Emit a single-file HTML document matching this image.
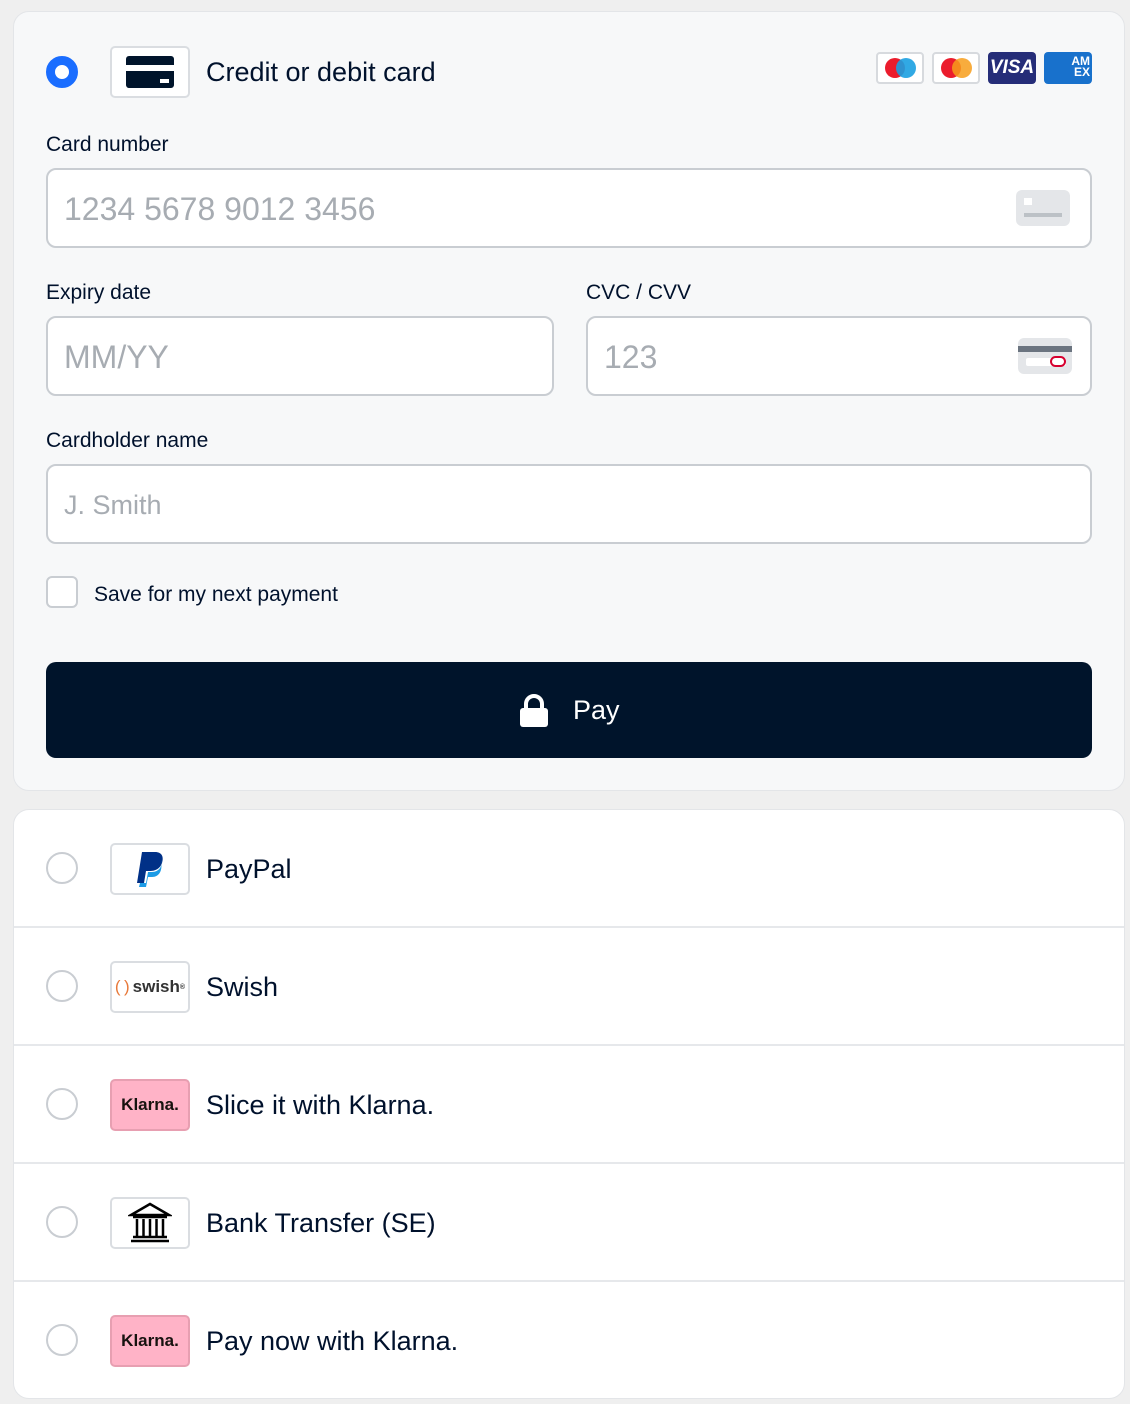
<!DOCTYPE html>
<html><head><meta charset="utf-8"><style>
*{box-sizing:border-box;margin:0;padding:0}
body{width:1130px;height:1404px;background:#efefef;font-family:"Liberation Sans",Arial,sans-serif;color:#00112c;position:relative;overflow:hidden}
.a{position:absolute}
.card1{left:13px;top:11px;width:1112px;height:780px;background:#f7f8f9;border:1px solid #e3e5e8;border-radius:16px}
.card2{left:13px;top:809px;width:1112px;height:590px;background:#fff;border:1px solid #e3e5e8;border-radius:16px;overflow:hidden}
.logo{width:80px;height:52px;border:2px solid #dadde1;border-radius:5px;background:#fff;display:flex;align-items:center;justify-content:center}
.lbl{font-size:21px}
.inp{border:2px solid #c9cdd2;border-radius:10px;background:#fff;height:80px;font-size:32px;color:#a7acb2;padding-left:16px;line-height:78px}
.radio{width:32px;height:32px;border-radius:50%;border:2px solid #c9cdd2;background:#fff}
.row{position:absolute;left:0;width:1112px;height:118px;border-bottom:2px solid #e6e8eb}
.row .radio{position:absolute;left:32px;top:42px}
.row .logo{position:absolute;left:96px;top:33px}
.row .t{position:absolute;left:192px;top:44px;font-size:27px}
.kl{background:#ffb3c7;border-color:#e79fb1;font-weight:bold;font-size:17px;color:#17120f}
.cb{width:76px;height:24px;border:2px solid #d7dade;border-radius:4px;background:#fff}
</style></head><body>
<div class="a card1"></div>
<div class="a radio" style="left:46px;top:56px;border:9px solid #1a6dff;background:#fff"></div>
<div class="a logo" style="left:110px;top:46px"><svg width="50" height="36"><rect x="1" y="2" width="48" height="32" rx="3" fill="#00142b"/><rect x="1" y="11" width="48" height="6" fill="#fff"/><rect x="35" y="25" width="9" height="4" fill="#fff"/></svg></div>
<div class="a" style="left:206px;top:57px;font-size:27px">Credit or debit card</div>
<div class="a cb" style="left:876px;top:52px;width:48px;height:32px"><svg width="44" height="28"><circle cx="17" cy="14" r="10" fill="#eb1c2d"/><circle cx="28" cy="14" r="10" fill="#1ba0e1" opacity=".9"/></svg></div>
<div class="a cb" style="left:932px;top:52px;width:48px;height:32px"><svg width="44" height="28"><circle cx="17" cy="14" r="10" fill="#eb1c2d"/><circle cx="28" cy="14" r="10" fill="#f79e1b" opacity=".85"/></svg></div>
<div class="a" style="left:988px;top:52px;width:48px;height:32px;background:#252d78;border-radius:4px;color:#fff;font-weight:bold;font-style:italic;font-size:19px;text-align:center;line-height:32px">VISA</div>
<div class="a" style="left:1044px;top:52px;width:48px;height:32px;background:#1871cc;border-radius:4px;color:#fff;font-weight:bold;font-size:12px;line-height:11px;text-align:right;padding:4px 2px 0 0">AM<br>EX</div>
<div class="a lbl" style="left:46px;top:133px">Card number</div>
<div class="a inp" style="left:46px;top:168px;width:1046px">1234 5678 9012 3456</div>
<div class="a" style="left:1016px;top:190px;width:54px;height:36px;background:#e4e6e9;border-radius:6px"><div class="a" style="left:8px;top:8px;width:8px;height:7px;background:#fff"></div><div class="a" style="left:8px;top:23px;width:38px;height:4px;background:#bcc1c6"></div></div>
<div class="a lbl" style="left:46px;top:281px">Expiry date</div>
<div class="a lbl" style="left:586px;top:281px">CVC / CVV</div>
<div class="a inp" style="left:46px;top:316px;width:508px">MM/YY</div>
<div class="a inp" style="left:586px;top:316px;width:506px">123</div>
<div class="a" style="left:1018px;top:338px;width:54px;height:36px;background:#e4e6e9;border-radius:6px"><div class="a" style="left:0;top:8px;width:54px;height:6px;background:#6b7480"></div><div class="a" style="left:8px;top:20px;width:40px;height:8px;background:#fff;border-radius:2px"></div><div class="a" style="left:32px;top:18px;width:16px;height:11px;border:2px solid #d6002f;border-radius:6px;background:#fff"></div></div>
<div class="a lbl" style="left:46px;top:429px">Cardholder name</div>
<div class="a inp" style="left:46px;top:464px;width:1046px;font-size:27px">J. Smith</div>
<div class="a" style="left:46px;top:576px;width:32px;height:32px;border:2px solid #c9cdd2;border-radius:6px;background:#fff"></div>
<div class="a lbl" style="left:94px;top:583px">Save for my next payment</div>
<div class="a" style="left:46px;top:662px;width:1046px;height:96px;background:#00142b;border-radius:10px"></div>
<svg class="a" style="left:519px;top:694px" width="30" height="34"><path d="M7 15V10a8 8 0 0 1 16 0v5" stroke="#fff" stroke-width="4" fill="none"/><rect x="1" y="14" width="28" height="19" rx="3" fill="#fff"/></svg>
<div class="a" style="left:573px;top:695px;font-size:27px;color:#fff">Pay</div>

<div class="a card2">
<div class="row" style="top:0"><div class="radio"></div><div class="logo"><svg width="34" height="38" viewBox="0 0 34 38"><path d="M9 2h13c7 0 9 5 7 11-2 6-7 8-12 8h-4l-2 12H4z" fill="#003087"/><path d="M28 10c2 6-2 12-9 12h-4l-2 11H7l-1 4h7l2-10h4c7 0 11-6 9-17z" fill="#1c9be6"/></svg></div><div class="t">PayPal</div></div>
<div class="row" style="top:118px"><div class="radio"></div><div class="logo" style="font-size:17px;font-weight:bold;color:#333"><span style="color:#e8793a;font-weight:normal;margin-right:3px">(&#8239;)</span>swish<sup style="font-size:7px">®</sup></div><div class="t">Swish</div></div>
<div class="row" style="top:236px"><div class="radio"></div><div class="logo kl">Klarna.</div><div class="t">Slice it with Klarna.</div></div>
<div class="row" style="top:354px"><div class="radio"></div><div class="logo"><svg width="44" height="42" viewBox="0 0 44 42"><path d="M22 2L3 13h38z" fill="none" stroke="#000" stroke-width="2.5"/><path d="M5 15h34M5 35h34M3 39h38M9 17v17M15.5 17v17M22 17v17M28.5 17v17M35 17v17" stroke="#000" stroke-width="2.5"/></svg></div><div class="t">Bank Transfer (SE)</div></div>
<div class="row" style="top:472px;border:none"><div class="radio"></div><div class="logo kl">Klarna.</div><div class="t">Pay now with Klarna.</div></div>
</div>
</body></html>
